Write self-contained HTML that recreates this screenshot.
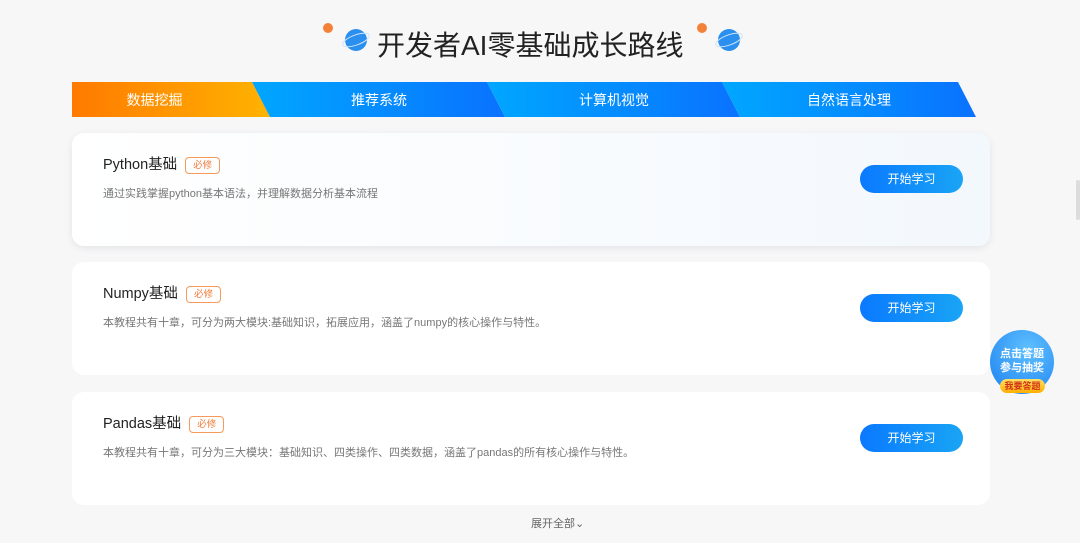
<!DOCTYPE html><html><head><meta charset="utf-8"><style>
body{margin:0;width:1080px;height:543px;background:#f7f7f8;font-family:"Liberation Sans","Noto Sans CJK SC",sans-serif;position:relative;overflow:hidden}
.t{position:absolute;left:377px;top:24px;font-size:28px;color:#222}
.card{position:absolute;left:72px;width:918px;height:113px;background:#fff;border-radius:12px}
.card h3{position:absolute;left:31px;top:23px;margin:0;font-weight:normal;font-size:14.5px;color:#222;display:flex;align-items:center;line-height:18px}
.tag{margin-left:8px;border:1px solid #f59a5a;color:#f07c3c;font-size:9.5px;border-radius:4px;padding:0 7px;line-height:15px}
.card p{position:absolute;left:31px;top:52px;margin:0;font-size:11px;color:#777}
.btn{position:absolute;left:788px;top:32px;width:103px;height:28px;border-radius:14px;background:linear-gradient(90deg,#0a79ff,#19a5f5);color:#fff;font-size:12px;text-align:center;line-height:28px}
.tab{position:absolute;top:82px;height:35px;color:#fff;font-size:14px;line-height:37px;text-align:center}
</style></head><body>
<svg style="position:absolute;left:0;top:0" width="1080" height="130">
<circle cx="328" cy="28" r="5" fill="#f4813a"/><circle cx="356" cy="40" r="11" fill="#2b8ff0"/>
<ellipse cx="356" cy="40" rx="14" ry="5" fill="none" stroke="#cfe3fb" stroke-width="1" transform="rotate(-20 356 40)"/>
<circle cx="702" cy="28" r="5" fill="#f4813a"/><circle cx="729" cy="40" r="11" fill="#2b8ff0"/>
<ellipse cx="729" cy="40" rx="14" ry="5" fill="none" stroke="#cfe3fb" stroke-width="1" transform="rotate(-20 729 40)"/>
<defs><linearGradient id="o" x1="0" x2="1"><stop offset="0" stop-color="#ff7a00"/><stop offset="1" stop-color="#ffb300"/></linearGradient>
<linearGradient id="b" x1="0" x2="1"><stop offset="0" stop-color="#00a7ff"/><stop offset="1" stop-color="#0a72ff"/></linearGradient></defs>
<polygon points="72,82 252,82 270,117 72,117" fill="url(#o)"/>
<polygon points="252,82 487,82 505,117 270,117" fill="url(#b)"/>
<polygon points="487,82 722,82 740,117 505,117" fill="url(#b)"/>
<polygon points="722,82 958,82 976,117 740,117" fill="url(#b)"/>
</svg>
<div class="t">开发者AI零基础成长路线</div>
<div class="tab" style="left:72px;width:165px">数据挖掘</div>
<div class="tab" style="left:270px;width:218px">推荐系统</div>
<div class="tab" style="left:505px;width:218px">计算机视觉</div>
<div class="tab" style="left:740px;width:218px">自然语言处理</div>
<div class="card" style="top:133px;background:linear-gradient(90deg,#fff,#f3f8fd);box-shadow:0 2px 8px rgba(0,0,0,.08)"><h3>Python基础<span class="tag">必修</span></h3><p>通过实践掌握python基本语法，并理解数据分析基本流程</p><div class="btn">开始学习</div></div>
<div class="card" style="top:262px"><h3>Numpy基础<span class="tag">必修</span></h3><p>本教程共有十章，可分为两大模块:基础知识，拓展应用，涵盖了numpy的核心操作与特性。</p><div class="btn">开始学习</div></div>
<div class="card" style="top:392px"><h3>Pandas基础<span class="tag">必修</span></h3><p>本教程共有十章，可分为三大模块：基础知识、四类操作、四类数据，涵盖了pandas的所有核心操作与特性。</p><div class="btn">开始学习</div></div>
<div style="position:absolute;left:531px;top:515px;font-size:11px;color:#666">展开全部⌄</div>
<div style="position:absolute;left:990px;top:330px;width:64px;height:64px;border-radius:50%;background:radial-gradient(circle at 60% 30%,#5fc0ff,#1a7ff0);color:#fff;font-size:11px;font-weight:bold;text-align:center;line-height:14px;padding-top:17px;box-sizing:border-box">点击答题<br>参与抽奖</div>
<div style="position:absolute;left:1000px;top:379px;width:45px;height:14px;border-radius:7px;background:linear-gradient(#ffe066,#ffae00);color:#d0301a;font-size:9px;text-align:center;line-height:14px;font-weight:bold">我要答题</div>
<div style="position:absolute;left:1076px;top:180px;width:4px;height:40px;background:#ddd;border-radius:2px"></div>
</body></html>
